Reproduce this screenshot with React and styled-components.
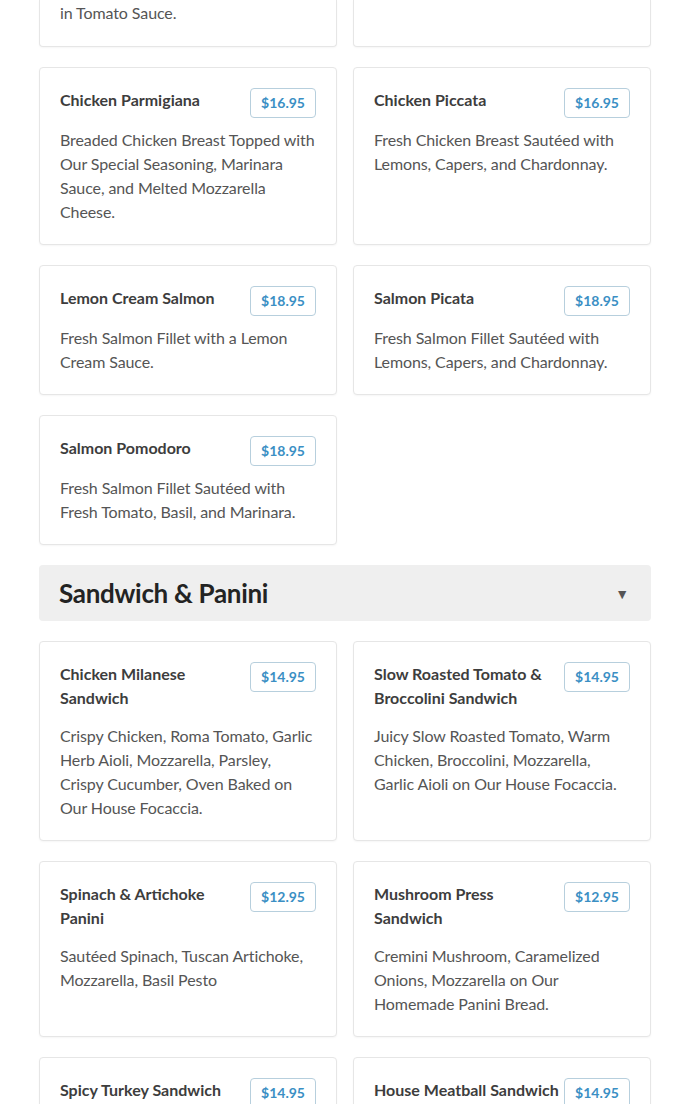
import React from "react";
import { styled, createGlobalStyle } from "styled-components";

const GlobalStyle = createGlobalStyle`
  * {
    box-sizing: border-box;
  }

  body {
    margin: 0;
    background: #ffffff;
    font-family: Lato, "Open Sans", sans-serif;
  }
`;

const Page = styled.div`
  width: 612px;
  margin: 0 auto;
`;

const Grid = styled.div`
  display: grid;
  grid-template-columns: 1fr 1fr;
  column-gap: 16px;
  row-gap: 20px;
`;

const Card = styled.div`
  background: #ffffff;
  border: 1px solid #e6e6e6;
  border-radius: 4px;
  box-shadow: 0 1px 2px rgba(0, 0, 0, 0.04);
  padding: 20px;

  ${(props) =>
    props.$clipped &&
    `
    border-top: none;
    border-top-left-radius: 0;
    border-top-right-radius: 0;
    padding-top: 1px;
    padding-bottom: 21px;
  `}
`;

const CardHead = styled.div`
  display: flex;
  align-items: flex-start;
  justify-content: space-between;
  gap: 4px;
  margin-bottom: 10px;
`;

const Title = styled.h3`
  flex: 1;
  margin: 0 0 4px;
  font-size: 16px;
  line-height: 24px;
  font-weight: 700;
  color: #3d3d3d;
`;

const Price = styled.span`
  flex-shrink: 0;
  height: 30px;
  padding: 0 10px;
  border: 1px solid #b7cfdd;
  border-radius: 4px;
  font-size: 14px;
  line-height: 28px;
  font-weight: 700;
  color: #3b8fc4;
`;

const Desc = styled.p`
  margin: 0;
  font-size: 16px;
  line-height: 24px;
  letter-spacing: -0.1px;
  color: #555555;
`;

const SectionBar = styled.div`
  display: flex;
  align-items: center;
  justify-content: space-between;
  height: 56px;
  margin: 20px 0;
  padding: 0 22px 0 20px;
  background: #efefef;
  border-radius: 4px;
`;

const SectionTitle = styled.h2`
  margin: 0;
  font-size: 26px;
  font-weight: 700;
  letter-spacing: -0.3px;
  color: #232323;
`;

const Caret = styled.span`
  font-size: 14px;
  color: #555555;
`;

const entrees = [
  {
    name: "Chicken Parmigiana",
    price: "$16.95",
    desc: "Breaded Chicken Breast Topped with Our Special Seasoning, Marinara Sauce, and Melted Mozzarella Cheese.",
  },
  {
    name: "Chicken Piccata",
    price: "$16.95",
    desc: "Fresh Chicken Breast Sautéed with Lemons, Capers, and Chardonnay.",
  },
  {
    name: "Lemon Cream Salmon",
    price: "$18.95",
    desc: "Fresh Salmon Fillet with a Lemon Cream Sauce.",
  },
  {
    name: "Salmon Picata",
    price: "$18.95",
    desc: "Fresh Salmon Fillet Sautéed with Lemons, Capers, and Chardonnay.",
  },
  {
    name: "Salmon Pomodoro",
    price: "$18.95",
    desc: "Fresh Salmon Fillet Sautéed with Fresh Tomato, Basil, and Marinara.",
  },
];

const sandwiches = [
  {
    name: "Chicken Milanese Sandwich",
    price: "$14.95",
    desc: "Crispy Chicken, Roma Tomato, Garlic Herb Aioli, Mozzarella, Parsley, Crispy Cucumber, Oven Baked on Our House Focaccia.",
  },
  {
    name: "Slow Roasted Tomato & Broccolini Sandwich",
    price: "$14.95",
    desc: "Juicy Slow Roasted Tomato, Warm Chicken, Broccolini, Mozzarella, Garlic Aioli on Our House Focaccia.",
  },
  {
    name: "Spinach & Artichoke Panini",
    price: "$12.95",
    desc: "Sautéed Spinach, Tuscan Artichoke, Mozzarella, Basil Pesto",
  },
  {
    name: "Mushroom Press Sandwich",
    price: "$12.95",
    desc: "Cremini Mushroom, Caramelized Onions, Mozzarella on Our Homemade Panini Bread.",
  },
  {
    name: "Spicy Turkey Sandwich",
    price: "$14.95",
    desc: "Roasted Turkey, Pepper Jack, Jalapeño Aioli, Arugula, Tomato on Our House Focaccia.",
  },
  {
    name: "House Meatball Sandwich",
    price: "$14.95",
    desc: "Homemade Meatballs, Marinara, Melted Mozzarella on Our House Focaccia.",
  },
];

const MenuCard = ({ item }) => (
  <Card>
    <CardHead>
      <Title>{item.name}</Title>
      <Price>{item.price}</Price>
    </CardHead>
    <Desc>{item.desc}</Desc>
  </Card>
);

const App = () => {
  return (
    <>
      <GlobalStyle />
      <Page>
        <Grid>
          <Card $clipped>
            <Desc>in Tomato Sauce.</Desc>
          </Card>
          <Card $clipped />
          {entrees.map((item) => (
            <MenuCard key={item.name} item={item} />
          ))}
        </Grid>

        <SectionBar>
          <SectionTitle>Sandwich &amp; Panini</SectionTitle>
          <Caret>▼</Caret>
        </SectionBar>

        <Grid>
          {sandwiches.map((item) => (
            <MenuCard key={item.name} item={item} />
          ))}
        </Grid>
      </Page>
    </>
  );
};

export default App;
